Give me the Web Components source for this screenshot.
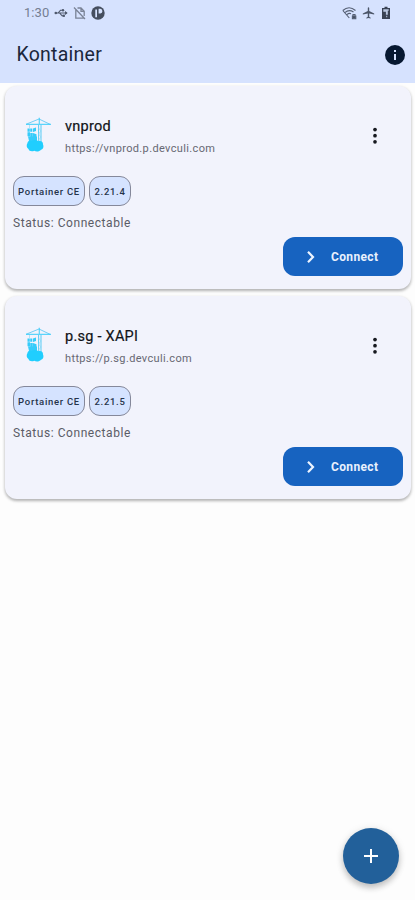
<!DOCTYPE html>
<html lang="en">
<head>
<meta charset="utf-8">
<title>Kontainer</title>
<style>
html, body { margin: 0; height: 100%; }
body { font-family: Roboto, "Liberation Sans", sans-serif; background: #fdfdfd; color: #111; overflow: hidden; }
</style>
</head>
<body>
<kontainer-app></kontainer-app>
<script>
const define = (name, html) => customElements.define(name, class extends HTMLElement {
  constructor() {
    super();
    this.attachShadow({ mode: "open" }).innerHTML = html;
  }
});

define("status-bar", `
<style>
:host { display: flex; align-items: center; height: 26px; padding: 0 23px 0 24px; box-sizing: border-box; color: #757e92; font-size: 13px; line-height: 26px; }
time { width: 26px; letter-spacing: .05px; margin-right: 4px; white-space: nowrap; }
svg { display: block; flex: none; }
.left, .right { display: flex; align-items: center; }
.left { gap: 5px; }
.right { margin-left: auto; gap: 5px; }
</style>
<time>1:30</time>
<div class="left">
  <svg width="14" height="14" viewBox="0 0 14 14" fill="none" stroke="#4e586c" stroke-width="1.1"><circle cx="1.8" cy="7" r="1.300" fill="#4e586c" stroke="none"/><path d="M2 7H13M4 7l2.500-2.700H9M5.500 7l2.500 2.700H10"/><path d="M11 5l2.700 2-2.700 2z" fill="#4e586c" stroke="none"/><circle cx="9" cy="4.300" r="1.200" fill="#4e586c" stroke="none"/><rect x="8.600" y="8.600" width="2.300" height="2.300" fill="#4e586c" stroke="none"/></svg>
  <svg width="13" height="14" viewBox="0 0 13 14" fill="none" stroke="#7a8396" stroke-width="1.300"><path d="M4.500 2H8l3.200 3.200V10M2.800 4v8.200h8.300M1 1.500l11 11.500M8 2v3.300h3"/></svg>
  <svg width="14" height="14" viewBox="0 0 14 14"><circle cx="7" cy="7" r="6.700" fill="#454e5e"/><path d="M4.300 3.600h1.700v7.600H4.300zM7.600 2.800h1.800q2 .4 2 2.400t-2 2.400H7.600z" fill="#d6e2fd"/></svg>
</div>
<div class="right">
  <svg width="15" height="14" viewBox="0 0 15 14" fill="none" stroke="#566074" stroke-width="1.100"><path d="M.8 4.500Q7 -1 13.500 4.500M2.800 6.600Q7 3 11.500 6M4.900 8.600Q7 6.700 9 7.700M.8 4.500L7.300 12"/><path d="M11 10V8.500h2V10"/><path d="M10.400 10h3.400v2.700h-3.400z" fill="#465064"/></svg>
  <svg width="13" height="14" viewBox="0 0 24 24" fill="#4b5568"><path d="M13.300 8.500V2.800c0-.8-.6-1.500-1.300-1.500s-1.300.7-1.300 1.500v5.700L1.500 13v1.900l9.200-2.100v6L8 20.700V22l4-1 4 1v-1.300l-2.700-1.900v-6l9.200 2.100V13z"/></svg>
  <svg width="12" height="14" viewBox="0 0 12 14"><path d="M2 2h2.500V.8h3V2H10v11H2z" fill="#394254"/><path d="M3.300 3.300h5.400v1.400H7.800v4H5.900v-3H3.300zM6.200 9.800h1v1.500h-1z" fill="#b9c6df"/></svg>
</div>`);

define("app-bar", `
<style>
:host { display: block; height: 83px; background: #d6e2fe; }
.row { display: flex; align-items: center; justify-content: space-between; height: 57px; padding: 0 10px 0 16.500px; }
h1 { margin: 0; font-size: 19.500px; line-height: 24px; font-weight: 400; color: #1b273c; letter-spacing: .25px; }
svg { display: block; }
</style>
<status-bar></status-bar>
<div class="row">
  <h1><slot></slot></h1>
  <svg width="20" height="20" viewBox="0 0 20 20"><circle cx="10" cy="10" r="10" fill="#071831"/><path d="M9 5h2v2H9zM9 9h2v6H9z" fill="#d6e2fe"/></svg>
</div>`);

define("crane-logo", `
<style>:host { display: block; width: 26px; height: 36px; margin-top: 1px; } svg { display: block; }</style>
<svg width="26" height="36" viewBox="0 0 26 36" fill="#36ccfa">
  <path d="M1 7.300L14 2l11 5.300" fill="none" stroke="#62c9f4" stroke-width=".9"/>
  <path d="M1 6.800h25v1.100H1zM13.700.8h1.200V7h-1.200z" opacity=".8"/>
  <path d="M13.600 8v20M16 8v20" fill="none" stroke="#58ccf4" stroke-width="1"/>
  <path d="M13.600 11l2.400 3-2.400 3 2.400 3-2.400 3 2.400 3M4.500 8v3" fill="none" stroke="#82d5f5" stroke-width=".6"/>
  <path d="M2.500 11.500h2.300v3.200H2.500zM5.200 11.500h2.100v3.200H5.200zM8 11.500l3-1v3.600l-3 .8zM2.500 15.200h2.600v4H2.500zM5.300 16h2.500v3.500H5.300zM8 16l3.500 1.300v4L8 20zM3 19.500h9v4.500H4z"/>
  <path d="M2.500 26c0-2 2.500-3 4-2.300 2.500-1.500 6-.2 7 .5 3-.8 4.700 1 4.500 3.200 1 2 .3 4.800-2 5.300-1.500 2.100-5 2.300-6.800 1-2.500 1.300-5.200.2-5.700-1.700C1.300 30.800 1.300 28 2.500 26z" fill="#20cefe"/>
</svg>`);

define("info-chip", `
<style>:host { display: inline-flex; align-items: center; justify-content: center; box-sizing: border-box; height: 30px; border: 1px solid #85889a; border-radius: 11px; background: #d5e3ff; color: #26334b; font-size: 9.500px; font-weight: 500; letter-spacing: .7px; white-space: nowrap; }</style>
<slot></slot>`);

define("connect-button", `
<style>
:host { display: block; }
button { display: flex; align-items: center; width: 120px; height: 39px; padding: 0 0 0 23px; border: 0; border-radius: 12px; background: #1763c0; color: #e9f1fd; font: 700 12px Roboto, sans-serif; letter-spacing: .35px; }
svg { margin-right: 15px; flex: none; }
</style>
<button><svg width="10" height="14" viewBox="0 0 10 14"><path d="M2 1.800l5 5.200-5 5.200" fill="none" stroke="#edf4ff" stroke-width="2.200"/></svg><slot></slot></button>`);

define("server-card", `
<style>
:host { display: flex; flex-direction: column; box-sizing: border-box; height: 203px; padding: 27px 8px 13px 8px; border-radius: 12px; background: #f2f3fc; box-shadow: 0 2px 3px rgba(0,0,0,.25), 0 1px 3px 1px rgba(0,0,0,.06); }
.head { display: grid; grid-template-columns: 26px 1fr 20px; column-gap: 14px; height: 46px; padding: 3px 18px 0 12px; box-sizing: border-box; }
h2 { margin: 1px 0 0; font-size: 14.500px; line-height: 20px; font-weight: 400; letter-spacing: .25px; color: #111318; -webkit-text-stroke: .2px #111318; }
.url { margin-top: 4px; font-size: 11px; line-height: 16px; letter-spacing: .36px; color: #676873; white-space: nowrap; }
.dots { display: block; margin-top: 11px; }
.chips { display: flex; gap: 4px; margin-top: 17px; }
.status { margin-top: 8px; font-size: 12px; line-height: 18px; letter-spacing: .56px; color: #5b5c66; }
connect-button { align-self: flex-end; margin-top: auto; }
::slotted([slot=version]) { width: 42px; }
::slotted([slot=edition]) { width: 72px; }
</style>
<div class="head">
  <crane-logo></crane-logo>
  <div><h2><slot name="name"></slot></h2><div class="url"><slot name="url"></slot></div></div>
  <svg class="dots" width="20" height="18" viewBox="0 0 20 18" fill="#17191f"><circle cx="10" cy="2.600" r="1.850"/><circle cx="10" cy="8.700" r="1.850"/><circle cx="10" cy="14.800" r="1.850"/></svg>
</div>
<div class="chips"><slot name="edition"></slot><slot name="version"></slot></div>
<div class="status"><slot name="status"></slot></div>
<connect-button>Connect</connect-button>`);

define("add-button", `
<style>:host { display: flex; } button { display: grid; place-items: center; width: 56px; height: 56px; padding: 0; border: 0; border-radius: 50%; background: #22609a; box-shadow: 0 4px 6px rgba(0,0,0,.2), 0 1px 8px rgba(0,0,0,.1); }</style>
<button aria-label="Add"><svg width="14" height="14" viewBox="0 0 14 14"><path d="M7 0v14M0 7h14" stroke="#fff" stroke-width="2"/></svg></button>`);

define("kontainer-app", `
<style>
:host { display: flex; flex-direction: column; height: 100vh; }
main { display: flex; flex-direction: column; gap: 7px; padding: 3px 4px 0 5px; }
footer { display: flex; justify-content: flex-end; margin-top: auto; padding: 0 16px 16px; }
</style>
<app-bar>Kontainer</app-bar>
<main>
  <server-card>
    <span slot="name">vnprod</span><span slot="url">https://vnprod.p.devculi.com</span>
    <info-chip slot="edition">Portainer CE</info-chip><info-chip slot="version">2.21.4</info-chip>
    <span slot="status">Status: Connectable</span>
  </server-card>
  <server-card>
    <span slot="name">p.sg - XAPI</span><span slot="url">https://p.sg.devculi.com</span>
    <info-chip slot="edition">Portainer CE</info-chip><info-chip slot="version">2.21.5</info-chip>
    <span slot="status">Status: Connectable</span>
  </server-card>
</main>
<footer><add-button></add-button></footer>`);
</script>
</body>
</html>
